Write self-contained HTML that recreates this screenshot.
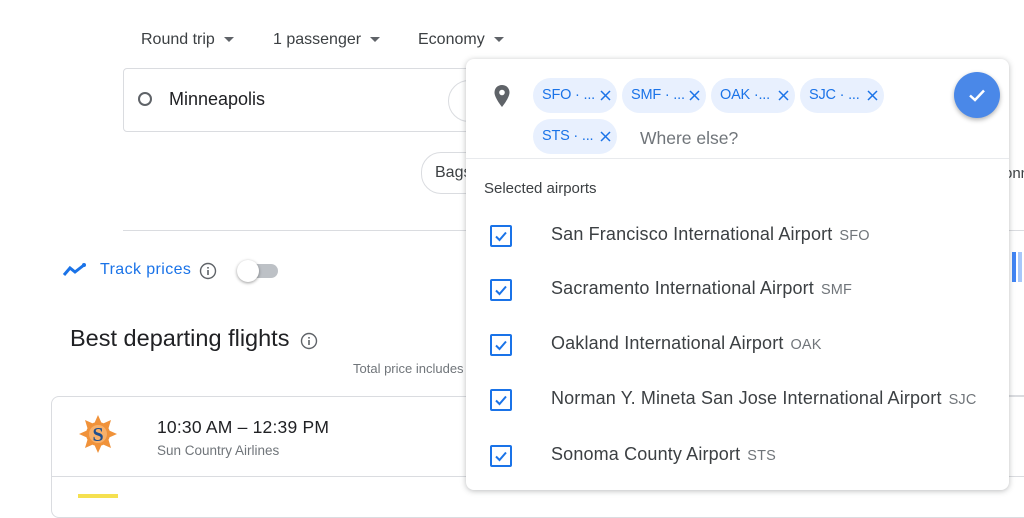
<!DOCTYPE html>
<html><head><style>
body{margin:0;width:1024px;height:498px;overflow:hidden;background:#fff;font-family:"Liberation Sans",Arial,sans-serif;position:relative;color:#3c4043}
.a{position:absolute}
.dd{font-size:16px;color:#3c4043;top:31px}
.dd:after{content:"";display:inline-block;border:5px solid transparent;border-top-color:#5f6368;border-bottom:0;margin-left:9px;vertical-align:middle}
.chip{position:absolute;height:35px;width:84px;border-radius:18px;background:#e8f0fe;color:#1a73e8;font-size:14.5px;letter-spacing:-.2px;line-height:35px;padding-left:9px;box-sizing:border-box;white-space:nowrap}
.chip svg{position:absolute;right:6px;top:12px}
.cb{position:absolute;left:490px;width:18px;height:18px;border:2px solid #1a73e8;border-radius:2px}
.cb svg{position:absolute;left:1px;top:1px}
.row{position:absolute;left:551px;font-size:18px;letter-spacing:.15px;color:#3c4043}
.row small{font-size:14.5px;color:#70757a;margin-left:7px}
</style></head><body>
<div class="a dd" style="left:141px">Round trip</div>
<div class="a dd" style="left:273px">1 passenger</div>
<div class="a dd" style="left:418px">Economy</div>
<div class="a" style="left:123px;top:68px;width:370px;height:62px;border:1px solid #dadce0;border-radius:4px"></div>
<div class="a" style="left:138px;top:92px;width:10px;height:10px;border:2.5px solid #5f6368;border-radius:50%"></div>
<div class="a" style="left:169px;top:89px;font-size:18px;color:#202124">Minneapolis</div>
<div class="a" style="left:448px;top:80px;width:40px;height:40px;border:1px solid #dadce0;border-radius:50%"></div>
<div class="a" style="left:421px;top:152px;width:80px;height:40px;border:1px solid #dadce0;border-radius:20px"></div>
<div class="a" style="left:435px;top:164px;font-size:16px">Bags</div>
<div class="a" style="left:123px;top:230px;width:901px;height:1px;background:#dadce0"></div>
<svg class="a" style="left:62px;top:262px" width="26" height="16"><path d="M2 13 L8 6 L13 10 L22 3" stroke="#1a73e8" stroke-width="3" fill="none"/><circle cx="22" cy="3" r="2" fill="#1a73e8"/></svg>
<div class="a" style="left:100px;top:261px;font-size:16px;letter-spacing:.4px;color:#1a73e8">Track prices</div>
<svg class="a" style="left:199px;top:262px" width="18" height="18"><circle cx="9" cy="9" r="7.5" stroke="#5f6368" stroke-width="1.4" fill="none"/><rect x="8.2" y="8" width="1.6" height="5" fill="#5f6368"/><rect x="8.2" y="5" width="1.6" height="1.6" fill="#5f6368"/></svg>
<div class="a" style="left:245px;top:264px;width:33px;height:14px;border-radius:7px;background:#bdc1c6"></div>
<div class="a" style="left:237px;top:260px;width:22px;height:22px;border-radius:50%;background:#fff;box-shadow:0 1px 3px rgba(0,0,0,.4)"></div>
<div class="a" style="left:70px;top:325px;font-size:23.5px;color:#202124">Best departing flights</div>
<svg class="a" style="left:300px;top:332px" width="18" height="18"><circle cx="9" cy="9" r="7.5" stroke="#5f6368" stroke-width="1.4" fill="none"/><rect x="8.2" y="8" width="1.6" height="5" fill="#5f6368"/><rect x="8.2" y="5" width="1.6" height="1.6" fill="#5f6368"/></svg>
<div class="a" style="left:353px;top:361px;font-size:13px;color:#70757a">Total price includes</div>
<div class="a" style="left:51px;top:396px;width:1000px;height:120px;border:1px solid #dadce0;border-radius:8px"></div>
<div class="a" style="left:51px;top:476px;width:1000px;height:1px;background:#dadce0"></div>
<svg class="a" style="left:78px;top:414px" width="40" height="40"><polygon points="20,1 24,10 33,6 30,16 39,20 30,24 33,34 24,30 20,39 16,30 7,34 10,24 1,20 10,16 7,6 16,10" fill="#f0923a"/><circle cx="20" cy="20" r="12" fill="#f0923a"/><circle cx="20" cy="20" r="9" fill="#f7b06a"/><text x="20" y="27" font-family="Liberation Serif" font-weight="bold" font-size="20" fill="#1d4e8f" text-anchor="middle">S</text></svg>
<div class="a" style="left:157px;top:417px;font-size:17.5px;letter-spacing:.2px;color:#202124">10:30 AM – 12:39 PM</div>
<div class="a" style="left:157px;top:443px;font-size:13.5px;color:#70757a">Sun Country Airlines</div>
<div class="a" style="left:78px;top:494px;width:40px;height:4px;background:#f5e050"></div>
<div class="a" style="left:1004px;top:165px;font-size:15px">onn</div>
<div class="a" style="left:1009px;top:395px;width:15px;height:1px;background:#dadce0"></div>
<div class="a" style="left:1012px;top:252px;width:4px;height:30px;background:#4285f4"></div>
<div class="a" style="left:1018px;top:252px;width:4px;height:30px;background:#a8c7fa"></div>
<!-- panel -->
<div class="a" style="left:466px;top:59px;width:543px;height:431px;background:#fff;border-radius:8px;box-shadow:0 1px 6px rgba(60,64,67,.35)"></div>
<svg class="a" style="left:493px;top:84px" width="18" height="24"><path d="M9 1C4.6 1 1.5 4.3 1.5 8.5 1.5 14 9 23 9 23S16.5 14 16.5 8.5C16.5 4.3 13.4 1 9 1Z" fill="#5f6368"/><circle cx="9" cy="8.5" r="2.8" fill="#fff"/></svg>
<div class="chip" style="left:533px;top:78px">SFO · ...<svg width="11" height="11"><path d="M1 1L10 10M10 1L1 10" stroke="#1a73e8" stroke-width="1.5"/></svg></div>
<div class="chip" style="left:622px;top:78px">SMF · ...<svg width="11" height="11"><path d="M1 1L10 10M10 1L1 10" stroke="#1a73e8" stroke-width="1.5"/></svg></div>
<div class="chip" style="left:711px;top:78px">OAK ·...<svg width="11" height="11"><path d="M1 1L10 10M10 1L1 10" stroke="#1a73e8" stroke-width="1.5"/></svg></div>
<div class="chip" style="left:800px;top:78px">SJC · ...<svg width="11" height="11"><path d="M1 1L10 10M10 1L1 10" stroke="#1a73e8" stroke-width="1.5"/></svg></div>
<div class="chip" style="left:533px;top:119px">STS · ...<svg width="11" height="11"><path d="M1 1L10 10M10 1L1 10" stroke="#1a73e8" stroke-width="1.5"/></svg></div>
<div class="a" style="left:640px;top:128px;font-size:17.5px;color:#70757a">Where else?</div>
<div class="a" style="left:954px;top:72px;width:46px;height:46px;border-radius:50%;background:#4a88e8;box-shadow:0 2px 5px rgba(0,0,0,.3)"></div>
<svg class="a" style="left:965px;top:83px" width="24" height="24"><path d="M5 12.5 L10 17 L19 7.5" stroke="#fff" stroke-width="2.5" fill="none"/></svg>
<div class="a" style="left:466px;top:158px;width:543px;height:1px;background:#e8eaed"></div>
<div class="a" style="left:484px;top:180px;font-size:15px;color:#3c4043">Selected airports</div>
<div class="cb" style="top:225px"><svg width="16" height="16"><path d="M3 8.5 L6.5 12 L13 4.5" stroke="#1a73e8" stroke-width="2" fill="none"/></svg></div>
<div class="row" style="top:224px">San Francisco International Airport<small>SFO</small></div>
<div class="cb" style="top:279px"><svg width="16" height="16"><path d="M3 8.5 L6.5 12 L13 4.5" stroke="#1a73e8" stroke-width="2" fill="none"/></svg></div>
<div class="row" style="top:278px">Sacramento International Airport<small>SMF</small></div>
<div class="cb" style="top:334px"><svg width="16" height="16"><path d="M3 8.5 L6.5 12 L13 4.5" stroke="#1a73e8" stroke-width="2" fill="none"/></svg></div>
<div class="row" style="top:333px">Oakland International Airport<small>OAK</small></div>
<div class="cb" style="top:389px"><svg width="16" height="16"><path d="M3 8.5 L6.5 12 L13 4.5" stroke="#1a73e8" stroke-width="2" fill="none"/></svg></div>
<div class="row" style="top:388px">Norman Y. Mineta San Jose International Airport<small>SJC</small></div>
<div class="cb" style="top:445px"><svg width="16" height="16"><path d="M3 8.5 L6.5 12 L13 4.5" stroke="#1a73e8" stroke-width="2" fill="none"/></svg></div>
<div class="row" style="top:444px">Sonoma County Airport<small>STS</small></div>
</body></html>
